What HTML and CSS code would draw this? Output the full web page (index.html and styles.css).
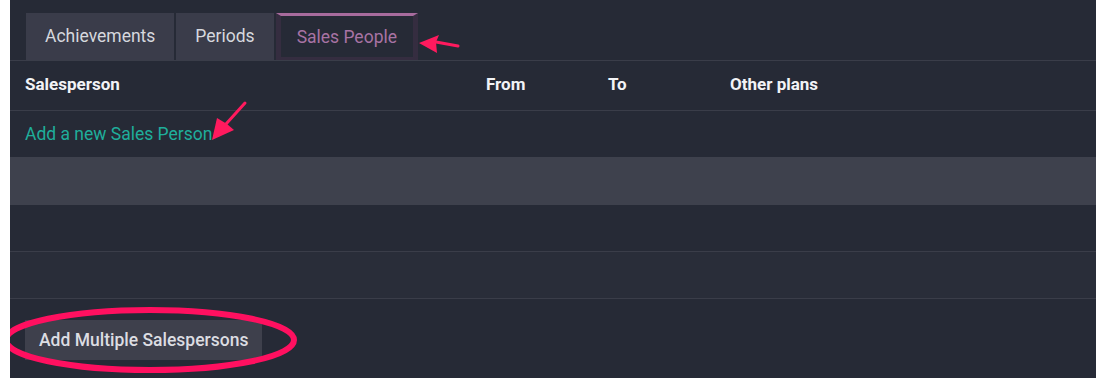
FILE: index.html
```html
<!DOCTYPE html>
<html lang="en">
<head>
    <meta charset="UTF-8">
    <title>Sales People</title>
    <link rel="stylesheet" href="styles.css">
</head>
<body>
    <div class="page">
        <div class="tabs">
            <div class="tab">Achievements</div>
            <div class="tab">Periods</div>
            <div class="tab active">Sales People</div>
        </div>

        <div class="row head">
            <span class="col name">Salesperson</span>
            <span class="col from">From</span>
            <span class="col to">To</span>
            <span class="col plans">Other plans</span>
        </div>
        <div class="row link-row">
            <a class="add-link">Add a new Sales Person</a>
        </div>
        <div class="row grey"></div>
        <div class="row lined"></div>
        <div class="row lined alt"></div>

        <div class="footer">
            <button class="multi-btn">Add Multiple Salespersons</button>
        </div>

        <!-- annotations -->
        <svg class="marks" width="1096" height="378" viewBox="0 0 1096 378">
            <path d="M458 46 L436 42" stroke="#ff1a5e" stroke-width="3" stroke-linecap="round" fill="none"/>
            <path d="M419 43 L439 35 L436 42 L437 53 Z" fill="#ff1a5e"/>
            <path d="M245 103 L226 124" stroke="#ff1a5e" stroke-width="3" stroke-linecap="round" fill="none"/>
            <path d="M212 140 L217 118 L227 124 L234 130 Z" fill="#ff1a5e"/>
            <ellipse cx="150" cy="340" rx="144" ry="30" stroke="#ff1060" stroke-width="6" fill="none"/>
        </svg>
    </div>
</body>
</html>
```

FILE: styles.css
```css
body {
    margin: 0;
    background-color: #ffffff;
    font-family: Roboto, 'Liberation Sans', sans-serif;
}

.page {
    margin-left: 10px;
    height: 378px;
    background-color: #262a36;
    position: relative;
    overflow: hidden;
}

.tabs {
    display: flex;
    gap: 2px;
    padding: 13px 0 0 16px;
    border-bottom: 1px solid #3a3d49;
}

.tab {
    box-sizing: border-box;
    height: 47px;
    padding: 0 19px 1px;
    display: flex;
    align-items: center;
    background-color: #3a3c4a;
    color: #d6d8de;
    font-size: 17.5px;
}

.tab.active {
    padding: 0 16px;
    background-color: #262a36;
    border: 5px solid #352d40;
    border-top: 3px solid #a76b9d;
    border-bottom: 3px solid #352d40;
    color: #a873a4;
}

.row {
    height: 46px;
    display: flex;
    align-items: center;
    padding-left: 15px;
}

.head {
    box-sizing: border-box;
    height: 50px;
    padding-bottom: 3px;
    border-bottom: 1px solid #3a3d49;
    font-weight: bold;
    color: #f2f3f6;
    font-size: 17px;
}

.col.name { width: 461px; }
.col.from { width: 122px; }
.col.to { width: 122px; }

.add-link {
    color: #1fae9b;
    font-size: 17.5px;
}

.grey {
    height: 48px;
    background-color: #3e414d;
}

.lined {
    border-bottom: 1px solid #3a3d49;
}

.alt {
    background-color: #292d39;
}

.footer {
    padding: 21px 0 0 15px;
}

.multi-btn {
    height: 40px;
    padding: 0 14px;
    border: none;
    background-color: #3e404c;
    color: #dcdde2;
    font-family: Roboto, 'Liberation Sans', sans-serif;
    font-size: 17.5px;
    font-weight: 500;
}

.marks {
    position: absolute;
    top: 0;
    left: -10px;
    pointer-events: none;
}
```
